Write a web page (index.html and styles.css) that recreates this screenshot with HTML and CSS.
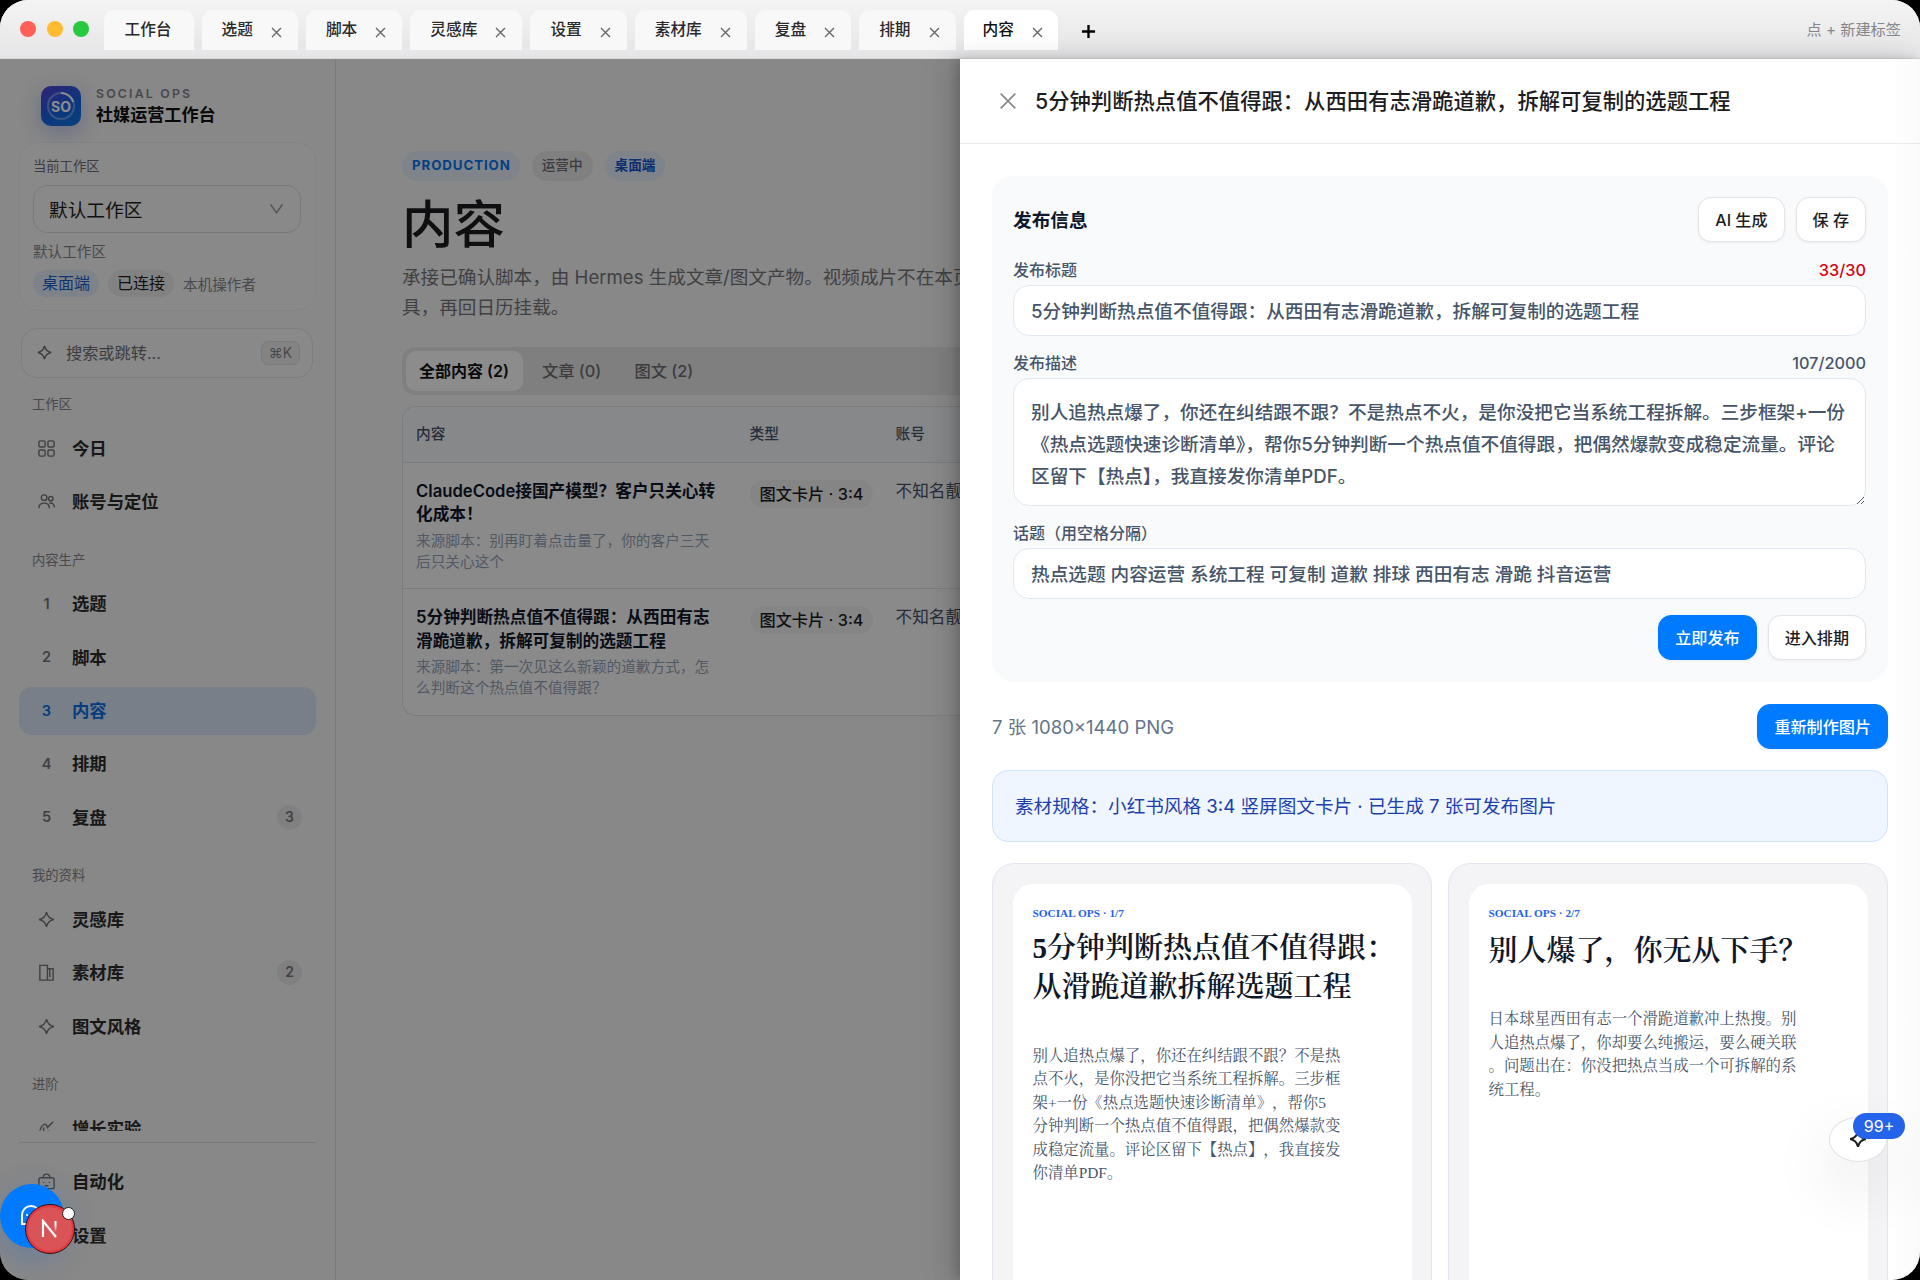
FILE: index.html
```html
<!DOCTYPE html>
<html lang="zh-CN">

<head>
  <meta charset="UTF-8" />
  <title>社媒运营工作台</title>
  <link rel="stylesheet" href="styles.css">
</head>

<body>
  <svg class="defs">
    <symbol id="close" viewBox="0 0 16 16">
      <path d="M1.500 1.500l13 13M14.500 1.500l-13 13" />
    </symbol>
    <symbol id="star" viewBox="0 0 20 20">
      <path d="M10 2.200c1 4.800 3 6.800 7.800 7.800-4.800 1-6.800 3-7.800 7.800-1-4.800-3-6.800-7.800-7.800 4.800-1 6.800-3 7.800-7.800z" />
    </symbol>
  </svg>

  <div class="window">
    <!-- 标题栏 -->
    <header class="titlebar">
      <div class="lights">
        <i class="red"></i>
        <i class="yellow"></i>
        <i class="green"></i>
      </div>
      <div class="tabs">
        <div class="tab home">工作台</div>
        <div class="tab">选题<svg><use href="#close" /></svg></div>
        <div class="tab">脚本<svg><use href="#close" /></svg></div>
        <div class="tab">灵感库<svg><use href="#close" /></svg></div>
        <div class="tab">设置<svg><use href="#close" /></svg></div>
        <div class="tab">素材库<svg><use href="#close" /></svg></div>
        <div class="tab">复盘<svg><use href="#close" /></svg></div>
        <div class="tab">排期<svg><use href="#close" /></svg></div>
        <div class="tab active">内容<svg><use href="#close" /></svg></div>
      </div>
      <svg class="add" viewBox="0 0 16 16"><path d="M8 1v14M1 8h14" /></svg>
      <span class="tip">点 + 新建标签</span>
    </header>

    <div class="app">
      <!-- 侧边栏 -->
      <aside class="sidebar">
        <div class="brand">
          <div class="logo">
            <svg viewBox="0 0 40 40">
              <circle cx="20" cy="20" r="13" stroke="#fff" stroke-opacity=".35" />
              <path d="M20 7a13 13 0 0 1 12.300 9" stroke="#fff" />
            </svg>
            <span>SO</span>
          </div>
          <div>
            <div class="brand-en">SOCIAL OPS</div>
            <div class="brand-cn">社媒运营工作台</div>
          </div>
        </div>

        <div class="workspace">
          <div class="ws-label">当前工作区</div>
          <div class="ws-select">
            默认工作区
            <svg viewBox="0 0 16 16"><path d="M1.500 3.500l6.500 9 6.500-9" /></svg>
          </div>
          <div class="ws-name">默认工作区</div>
          <div class="ws-chips">
            <span class="chip blue">桌面端</span>
            <span class="chip">已连接</span>
            <span class="ws-user">本机操作者</span>
          </div>
        </div>

        <div class="search">
          <svg><use href="#star" /></svg>
          <span>搜索或跳转...</span>
          <kbd>⌘K</kbd>
        </div>

        <nav class="nav">
          <div class="nav-label first">工作区</div>
          <div class="nav-item">
            <svg viewBox="0 0 20 20"><rect x="2" y="2" width="6.500" height="6.500" rx="1.500" /><rect x="11.500" y="2" width="6.500" height="6.500" rx="1.500" /><rect x="2" y="11.500" width="6.500" height="6.500" rx="1.500" /><rect x="11.500" y="11.500" width="6.500" height="6.500" rx="1.500" /></svg>
            今日
          </div>
          <div class="nav-item">
            <svg viewBox="0 0 20 20"><circle cx="7.500" cy="6" r="3" /><circle cx="14.500" cy="7" r="2.300" /><path d="M2 17c0-3.500 2.300-5.300 5.500-5.300s5.500 1.800 5.500 5.300M13 11.800c3-.8 5.300 1 5.300 4.200" /></svg>
            账号与定位
          </div>

          <div class="nav-label">内容生产</div>
          <div class="nav-item"><b>1</b>选题</div>
          <div class="nav-item"><b>2</b>脚本</div>
          <div class="nav-item on"><b>3</b>内容</div>
          <div class="nav-item"><b>4</b>排期</div>
          <div class="nav-item"><b>5</b>复盘<em>3</em></div>

          <div class="nav-label">我的资料</div>
          <div class="nav-item"><svg><use href="#star" /></svg>灵感库</div>
          <div class="nav-item">
            <svg viewBox="0 0 20 20"><path d="M3 2.500h8v15.500H3zM11 6h6v12h-6M13.500 6v9" /></svg>
            素材库<em>2</em>
          </div>
          <div class="nav-item"><svg><use href="#star" /></svg>图文风格</div>

          <div class="nav-label">进阶</div>
          <div class="nav-item">
            <svg viewBox="0 0 20 20"><path d="M3 12c3-8 7-8 8-3l6-6M7 9v9M12 12v6M3 18h14" /></svg>
            增长实验
          </div>
        </nav>

        <div class="nav-foot">
          <div class="nav-item">
            <svg viewBox="0 0 20 20"><rect x="2" y="6" width="16" height="11.500" rx="2" /><path d="M6.500 6c0-5 7-5 7 0M7 10.500v1M13 10.500v1M8 14.500h4" /></svg>
            自动化
          </div>
          <div class="nav-item"><b></b>设置</div>
        </div>
      </aside>

      <!-- 内容列表 -->
      <main class="main">
        <div class="tags">
          <span class="tag prod">PRODUCTION</span>
          <span class="tag gray">运营中</span>
          <span class="tag blue">桌面端</span>
        </div>
        <h1>内容</h1>
        <p class="desc">承接已确认脚本，由 Hermes 生成文章/图文产物。视频成片不在本页<br>具，再回日历挂载。</p>

        <div class="filter">
          <span class="on">全部内容 (2)</span>
          <span>文章 (0)</span>
          <span>图文 (2)</span>
        </div>

        <div class="table">
          <div class="tr th">
            <div>内容</div>
            <div>类型</div>
            <div>账号</div>
          </div>
          <div class="tr">
            <div>
              <div class="name">ClaudeCode接国产模型？客户只关心转<br>化成本！</div>
              <div class="source">来源脚本：别再盯着点击量了，你的客户三天<br>后只关心这个</div>
            </div>
            <div><span class="type">图文卡片 · 3:4</span></div>
            <div class="account">不知名靓仔</div>
          </div>
          <div class="tr">
            <div>
              <div class="name">5分钟判断热点值不值得跟：从西田有志<br>滑跪道歉，拆解可复制的选题工程</div>
              <div class="source">来源脚本：第一次见这么新颖的道歉方式，怎<br>么判断这个热点值不值得跟？</div>
            </div>
            <div><span class="type">图文卡片 · 3:4</span></div>
            <div class="account">不知名靓仔</div>
          </div>
        </div>
      </main>

      <div class="mask"></div>

      <!-- 详情抽屉 -->
      <section class="drawer">
        <div class="drawer-head">
          <svg><use href="#close" /></svg>
          <h2>5分钟判断热点值不值得跟：从西田有志滑跪道歉，拆解可复制的选题工程</h2>
        </div>
        <div class="drawer-body">
          <div class="publish">
            <div class="publish-head">
              <h3>发布信息</h3>
              <button class="btn">AI 生成</button>
              <button class="btn">保 存</button>
            </div>
            <div class="label first">发布标题<span class="over">33/30</span></div>
            <input class="field" value="5分钟判断热点值不值得跟：从西田有志滑跪道歉，拆解可复制的选题工程">
            <div class="label">发布描述<span>107/2000</span></div>
            <textarea class="field area">别人追热点爆了，你还在纠结跟不跟？不是热点不火，是你没把它当系统工程拆解。三步框架+一份
《热点选题快速诊断清单》，帮你5分钟判断一个热点值不值得跟，把偶然爆款变成稳定流量。评论
区留下【热点】，我直接发你清单PDF。</textarea>
            <div class="label">话题（用空格分隔）</div>
            <input class="field" value="热点选题 内容运营 系统工程 可复制 道歉 排球 西田有志 滑跪 抖音运营">
            <div class="publish-foot">
              <button class="btn primary">立即发布</button>
              <button class="btn">进入排期</button>
            </div>
          </div>

          <div class="images-head">
            <span>7 张 1080×1440 PNG</span>
            <button class="btn primary">重新制作图片</button>
          </div>

          <div class="spec">素材规格：小红书风格 3:4 竖屏图文卡片 · 已生成 7 张可发布图片</div>

          <div class="images">
            <div class="frame">
              <div class="card">
                <div class="no">SOCIAL OPS · 1/7</div>
                <div class="title">5分钟判断热点值不值得跟：<br>从滑跪道歉拆解选题工程</div>
                <div class="text">别人追热点爆了，你还在纠结跟不跟？不是热<br>点不火，是你没把它当系统工程拆解。三步框<br>架+一份《热点选题快速诊断清单》，帮你5<br>分钟判断一个热点值不值得跟，把偶然爆款变<br>成稳定流量。评论区留下【热点】，我直接发<br>你清单PDF。</div>
              </div>
            </div>
            <div class="frame">
              <div class="card">
                <div class="no">SOCIAL OPS · 2/7</div>
                <div class="title one">别人爆了，你无从下手？</div>
                <div class="text">日本球星西田有志一个滑跪道歉冲上热搜。别<br>人追热点爆了，你却要么纯搬运，要么硬关联<br>。问题出在：你没把热点当成一个可拆解的系<br>统工程。</div>
              </div>
            </div>
          </div>
        </div>
      </section>
    </div>

    <!-- 悬浮按钮 -->
    <div class="assistant">
      <svg><use href="#star" /></svg>
      <span>99+</span>
    </div>
    <div class="chat">
      <svg viewBox="0 0 24 24"><path d="M3 21V12a9 9 0 1 1 9 9z" /><path d="M8 12h.1M12 12h.1M16 12h.1" /></svg>
    </div>
    <div class="next">
      <svg viewBox="0 0 20 20">
        <defs>
          <linearGradient id="fade" x1="0" y1="0" x2="0" y2="1">
            <stop offset=".3" stop-color="#fff" />
            <stop offset="1" stop-color="#fff" stop-opacity="0" />
          </linearGradient>
        </defs>
        <path d="M3 18V2l13 16" stroke="#fff" />
        <rect x="14.500" y="2" width="2" height="11" fill="url(#fade)" />
      </svg>
      <i></i>
    </div>
  </div>
</body>

</html>
```

FILE: styles.css
```css
* {
  margin: 0;
  padding: 0;
  box-sizing: border-box;
}

html,
body {
  width: 100%;
  height: 100%;
  background-color: #000;
  overflow: hidden;
}

body,
input,
textarea,
button {
  font-family: Inter, "Noto Sans CJK SC", sans-serif;
}

svg {
  fill: none;
  stroke: currentColor;
  flex: none;
}

.defs {
  display: none;
}

.window {
  position: relative;
  height: 1280px;
  display: flex;
  flex-direction: column;
  border-radius: 28px;
  overflow: hidden;
  background: #f7f7f7;
}

/* 标题栏 */
.titlebar {
  height: 59px;
  flex: none;
  display: flex;
  align-items: center;
  padding: 0 19px 0 20px;
  background: linear-gradient(#f4f4f4, #e5e5e7);
  border-bottom: 1px solid #d8d8da;
}

.lights {
  display: flex;
  gap: 10.500px;
  width: 84px;
}

.lights i {
  width: 16px;
  height: 16px;
  border-radius: 50%;
}

.red {
  background: #ff5f57;
}

.yellow {
  background: #febc2e;
}

.green {
  background: #28c840;
}

.tabs {
  display: flex;
  gap: 8px;
  margin-top: 1px;
}

.tab {
  height: 40px;
  display: flex;
  align-items: center;
  padding: 0 16px 2px 20px;
  font-size: 15.700px;
  font-weight: 500;
  color: #2a2a2c;
  background: #f8f8f8;
  border-radius: 11px 11px 0 0;
}

.tab svg {
  width: 11px;
  height: 11px;
  margin: 7px 0 0 18px;
  color: #68686c;
  stroke-width: 2;
}

.tab.home {
  padding: 0 22px 2px 20.500px;
}

.tab.active {
  background: #fff;
  padding-left: 19px;
  padding-right: 15px;
  color: #111;
}

.add {
  width: 15px;
  height: 15px;
  margin: 5px 0 0 23px;
  stroke-width: 2.500;
}

.tip {
  margin: 0 0 3px auto;
  font-size: 15.200px;
  color: #85858a;
}

.app {
  position: relative;
  flex: 1;
  display: flex;
  min-height: 0;
}

/* 侧边栏 */
.sidebar {
  width: 336px;
  flex: none;
  display: flex;
  flex-direction: column;
  padding: 27px 19px 21px 19px;
  border-right: 1px solid #dededf;
}

.brand {
  display: flex;
  align-items: center;
  gap: 15px;
  height: 40px;
  padding-left: 22px;
}

.logo {
  position: relative;
  width: 40px;
  height: 40px;
  border-radius: 10px;
  background: linear-gradient(150deg, #5540d8, #1666e6 60%, #0b78e0);
  box-shadow: 0 6px 20px rgba(60, 90, 220, .3);
  color: #fff;
  font-size: 14px;
  font-weight: 700;
  line-height: 41px;
  text-align: center;
}

.logo svg {
  position: absolute;
  left: 0;
  top: 0;
  stroke-width: 2;
}

.brand-en {
  font-size: 12.300px;
  line-height: 18px;
  font-weight: 600;
  letter-spacing: 2.200px;
  color: #86868b;
}

.brand-cn {
  font-size: 17.100px;
  line-height: 24px;
  font-weight: 600;
  color: #111;
}

.workspace {
  height: 169px;
  margin: 16px 0 17px;
  padding: 13px 14px 0 13px;
  border: 1px solid #f0f0f0;
  border-radius: 20px;
  background: #fafafa;
}

.ws-label {
  font-size: 13.300px;
  line-height: 20px;
  color: #6e6e73;
}

.ws-select {
  display: flex;
  align-items: center;
  justify-content: space-between;
  height: 48px;
  margin-top: 9px;
  padding: 0 16px 2px 15px;
  border: 1px solid #dcdcdf;
  border-radius: 14px;
  font-size: 18.670px;
  color: #1d1d1f;
}

.ws-select svg {
  width: 15px;
  height: 15px;
  color: #98989d;
  stroke-width: 1.500;
}

.ws-name {
  margin-top: 8px;
  font-size: 14.600px;
  line-height: 22px;
  color: #86868b;
}

.ws-chips {
  display: flex;
  align-items: center;
  gap: 9px;
  margin-top: 7px;
}

.chip {
  height: 27px;
  line-height: 27px;
  padding: 0 9px;
  border-radius: 14px;
  background: #ededef;
  font-size: 16px;
  color: #1d1d1f;
}

.chip.blue {
  background: #e3eefa;
  color: #1d5fd0;
}

.ws-user {
  font-size: 14.600px;
  color: #86868b;
}

.search {
  height: 50px;
  flex: none;
  display: flex;
  align-items: center;
  margin: 0 3px 0 2px;
  padding: 0 12px 1px 14px;
  border: 1px solid #e6e6e8;
  border-radius: 16px;
  background: #fafafa;
  font-size: 16.200px;
  color: #6e6e73;
}

.search svg {
  width: 17px;
  height: 17px;
  margin-right: 13px;
  stroke-width: 1.700;
}

.search span {
  margin-top: -2px;
}

kbd {
  width: 39px;
  height: 24px;
  margin: 1px 0 0 auto;
  border: 1px solid #dfdfe1;
  border-radius: 7px;
  background: #eeeeef;
  font: 14px/22px Inter, "DejaVu Sans", sans-serif;
  text-align: center;
  color: #86868b;
}

.nav {
  flex: 1;
  min-height: 0;
  margin-bottom: 11px;
  overflow: hidden;
}

.nav-label {
  height: 49px;
  padding: 14px 0 0 13px;
  font-size: 13.300px;
  line-height: 40px;
  color: #86868b;
}

.nav-label.first {
  height: 41px;
  padding-top: 6px;
}

.nav-item {
  height: 48px;
  display: flex;
  align-items: center;
  margin-top: 5.330px;
  padding: 0 14px 2px 18px;
  border-radius: 13px;
  font-size: 17.330px;
  font-weight: 600;
  color: #2c2c2e;
}

.nav-item svg,
.nav-item b {
  width: 19px;
  height: 19px;
  margin-right: 16px;
  color: #76767c;
  stroke-width: 1.500;
}

.nav-item svg {
  margin-top: 2px;
}

.nav-item b {
  margin-top: 3px;
  font-size: 14.600px;
  line-height: 19px;
  font-weight: 600;
  text-align: center;
}

.nav-item em {
  width: 25px;
  height: 25px;
  margin: 2px 0 0 auto;
  border-radius: 50%;
  background: #e9e9ea;
  font: 600 13.800px/25px Inter, sans-serif;
  text-align: center;
  color: #76767c;
}

.nav-item.on,
.nav-item.on b {
  color: #0a6fe8;
}

.nav-item.on {
  background: #dbe7f8;
}

.nav-foot {
  border-top: 1px solid #dcdcde;
  padding-top: 9px;
}

/* 内容列表 */
.main {
  flex: 1;
  padding: 92px 0 0 66px;
  white-space: nowrap;
}

.tags {
  display: flex;
  gap: 12px;
}

.tag {
  height: 30px;
  line-height: 29px;
  padding: 0 10px;
  border-radius: 15px;
  font-size: 13.600px;
  font-weight: 500;
}

.tag.prod {
  padding: 0 9px 0 10px;
  background: #e6f1fc;
  color: #0a75f0;
  font-size: 13.300px;
  font-weight: 700;
  letter-spacing: .9px;
}

.tag.gray {
  background: #e9e9eb;
  color: #6e6e73;
}

.tag.blue {
  background: #e6f1fc;
  color: #1555cc;
  font-weight: 600;
}

h1 {
  margin-top: 7px;
  font-size: 51.500px;
  line-height: 72px;
  font-weight: 500;
  color: #1d1d1f;
}

.desc {
  margin-top: 3px;
  font-size: 18.600px;
  line-height: 29.500px;
  color: #76767b;
}

.filter {
  display: flex;
  height: 48px;
  margin-top: 25px;
  padding: 4px;
  border-radius: 14px;
  background: #e8e8ea;
}

.filter span {
  height: 40px;
  margin-right: 5px;
  padding: 0 14px;
  border-radius: 10px;
  font-size: 16.300px;
  line-height: 40px;
  font-weight: 500;
  color: #6e6e73;
}

.filter .on {
  padding: 0 14px 0 13px;
  background: #fff;
  color: #111;
  font-size: 16px;
  font-weight: 600;
}

.table {
  margin-top: 11px;
  border: 1px solid #dde3ea;
  border-right: 0;
  border-radius: 14px 0 0 14px;
  background: #fcfcfd;
  overflow: hidden;
}

.tr {
  display: grid;
  grid-template-columns: 333.500px 146px 1fr;
  height: 126.500px;
  padding: 17px 0 0 13px;
  border-top: 1px solid #dde3ea;
}

.tr.th {
  height: 54.500px;
  padding-top: 0;
  border-top: 0;
  background: #f6f8fb;
  font-size: 14.670px;
  line-height: 55px;
  font-weight: 500;
  color: #475569;
}

.name {
  font-size: 16.670px;
  line-height: 23.500px;
  font-weight: 600;
  color: #0f172a;
}

.source {
  margin-top: 4px;
  font-size: 14.670px;
  line-height: 21px;
  color: #94a3b8;
}

.type {
  display: inline-block;
  height: 28px;
  line-height: 28px;
  padding: 0 10px;
  border-radius: 14px;
  background: #f3f3f4;
  font-size: 16.200px;
  font-weight: 500;
  color: #1d1d1f;
}

.account {
  font-size: 16.670px;
  line-height: 23.500px;
  color: #475569;
}

.mask {
  position: absolute;
  inset: 0;
  background: rgba(0, 0, 0, .45);
}

/* 详情抽屉 */
.drawer {
  position: absolute;
  top: 0;
  right: 0;
  bottom: 0;
  width: 960px;
  background: linear-gradient(90deg, #fff 97%, #fafafa);
  box-shadow: -8px 0 21px rgba(0, 0, 0, .1), -4px 0 8px rgba(0, 0, 0, .12), -12px 0 37px rgba(0, 0, 0, .06);
}

.drawer-head {
  height: 85px;
  display: flex;
  align-items: center;
  padding-left: 39px;
  border-bottom: 1px solid #ebebeb;
}

.drawer-head svg {
  width: 18px;
  height: 18px;
  margin-right: 18px;
  color: #88888a;
  stroke-width: 1.500;
}

h2 {
  padding-bottom: 3px;
  font-size: 21.330px;
  font-weight: 500;
  color: #1d1d1f;
}

.drawer-body {
  padding: 32px;
}

.publish {
  height: 506px;
  padding: 21px 22px 21px 21px;
  border-radius: 21px;
  background: #f8fafc;
}

.publish-head {
  display: flex;
  align-items: center;
  gap: 11px;
  height: 45px;
}

h3 {
  flex: 1;
  padding-bottom: 2px;
  font-size: 18.670px;
  font-weight: 600;
  color: #0f172a;
}

.btn {
  height: 45px;
  padding: 0 16px 1px;
  border: 1px solid #e4e4e7;
  border-radius: 13px;
  background: #fff;
  box-shadow: 0 1px 3px rgba(0, 0, 0, .06);
  font-size: 16.100px;
  font-weight: 500;
  color: #1d1d1f;
}

.btn.primary {
  border-color: #007aff;
  background: #007aff;
  color: #fff;
}

.label {
  display: flex;
  justify-content: space-between;
  height: 28px;
  margin-top: 14px;
  font-size: 16px;
  line-height: 26px;
  font-weight: 500;
  color: #475569;
}

.label.first {
  margin-top: 15px;
}

.label span {
  font-size: 16.300px;
}

.label .over {
  color: #d9000d;
}

.field {
  display: block;
  width: 100%;
  height: 51px;
  padding: 0 17px 2px;
  border: 1px solid #e2e8f0;
  border-radius: 16px;
  background: #fff;
  outline: none;
  font-size: 18.650px;
  font-weight: 500;
  color: #475569;
}

.area {
  height: 128px;
  padding-top: 17px;
  line-height: 32px;
  white-space: pre;
  overflow: hidden;
}

.publish-foot {
  display: flex;
  justify-content: flex-end;
  gap: 11px;
  margin-top: 16px;
}

.images-head {
  display: flex;
  align-items: center;
  justify-content: space-between;
  margin-top: 22px;
  font-size: 18.550px;
  color: #64748b;
}

.images-head span {
  padding-bottom: 2px;
}

.spec {
  height: 72px;
  margin: 21px 0;
  padding-left: 22px;
  border: 1px solid #cfe3fb;
  border-radius: 16px;
  background: #eff6ff;
  font-size: 18.620px;
  line-height: 70px;
  color: #1e40af;
}

.images {
  display: grid;
  grid-template-columns: repeat(2, minmax(0, 1fr));
  gap: 16px;
}

.frame {
  height: 600px;
  padding: 19.500px;
  border: 1px solid #e2e6f0;
  border-radius: 22px;
  background: #f4f4f6;
}

/* 生成的图文卡片 */
.card {
  height: 532px;
  padding: 19px 20px;
  border-radius: 20px;
  background: #fff;
  font-family: "Liberation Serif", "Noto Serif CJK SC", "Noto Sans CJK SC", serif;
  text-spacing-trim: space-all;
  white-space: nowrap;
}

.no {
  font-size: 11.300px;
  line-height: 20px;
  font-weight: 700;
  color: #2563eb;
}

.title {
  margin-top: 6px;
  font-size: 29px;
  line-height: 39.500px;
  font-weight: 600;
  color: #0f172a;
}

.title.one {
  margin-top: 9px;
}

.text {
  margin-top: 36px;
  font-size: 15.400px;
  line-height: 23.500px;
  color: #475569;
}

/* 悬浮按钮 */
.assistant {
  position: absolute;
  left: 1829px;
  top: 1117px;
  width: 58px;
  height: 45px;
  border: 1px solid #e2e2e4;
  border-radius: 50%;
  background: #fff;
  box-shadow: 0 24px 64px rgba(0, 0, 0, .12);
}

.assistant svg {
  position: absolute;
  left: 18px;
  top: 11px;
  width: 20px;
  height: 20px;
  stroke-width: 2;
  color: #1d1d1f;
}

.assistant span {
  position: absolute;
  left: 23px;
  top: -5px;
  width: 52px;
  height: 26px;
  border-radius: 13px;
  background: #2563eb;
  color: #fff;
  font-size: 16px;
  line-height: 26px;
  text-align: center;
}

.chat {
  position: absolute;
  left: 0;
  top: 1184px;
  width: 64px;
  height: 64px;
  padding: 19px;
  border-radius: 50%;
  background: #007aff;
  box-shadow: 0 10px 32px rgba(0, 90, 220, .25);
  color: #fff;
}

.chat svg {
  display: block;
  width: 24px;
  height: 24px;
  stroke-width: 2;
  stroke-linecap: round;
}

.next {
  position: absolute;
  left: 25px;
  top: 1204px;
  width: 50px;
  height: 50px;
  padding: 14px;
  border: 1px solid #2b1012;
  border-radius: 50%;
  background: #da5356;
  box-shadow: inset 0 0 0 2px #e5383d;
}

.next svg {
  display: block;
  width: 20px;
  height: 20px;
  stroke-width: 2.200;
}

.next rect {
  stroke: none;
}

.next i {
  position: absolute;
  right: -1px;
  top: 2px;
  width: 13px;
  height: 13px;
  border: 1px solid #222;
  border-radius: 50%;
  background: #fff;
}
```
